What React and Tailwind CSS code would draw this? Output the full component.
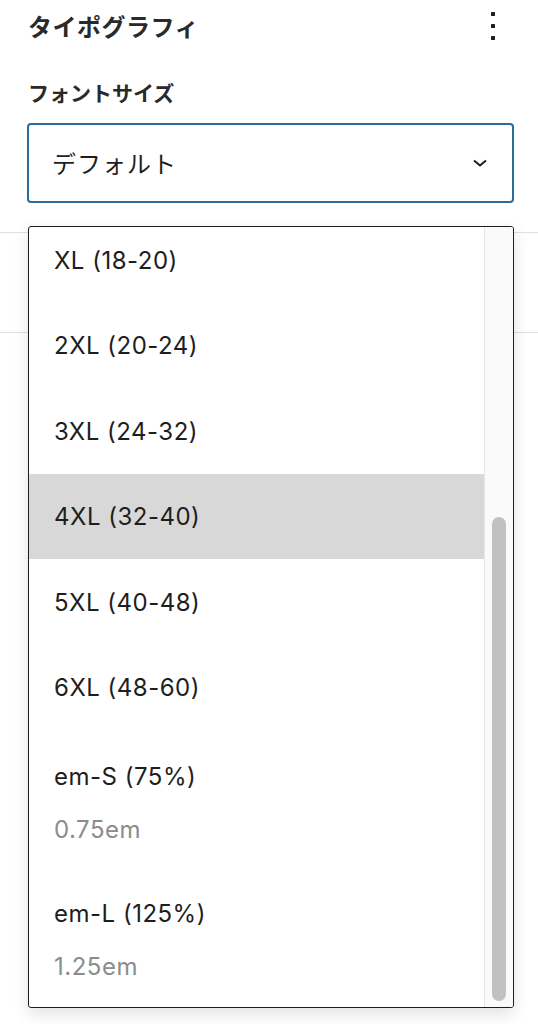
const sizes = ['XL (18-20)', '2XL (20-24)', '3XL (24-32)', '4XL (32-40)', '5XL (40-48)', '6XL (48-60)'];

const emSizes = [
  { label: 'em-S (75%)', hint: '0.75em' },
  { label: 'em-L (125%)', hint: '1.25em' },
];

const jp = { fontFamily: '"Noto Sans CJK JP", "Noto Sans", sans-serif' };
const latin = { fontFamily: 'Inter, "Noto Sans", sans-serif' };

export default function App() {
  const active = '4XL (32-40)';

  return (
    <div className="relative h-[1024px] w-full overflow-hidden bg-white text-[#1e1e1e]" style={jp}>
      {/* Panel */}
      <div className="flex h-[52px] items-center justify-between pl-[28px] pr-[40px]">
        <h2 className="text-[24px] font-semibold leading-[32px] tracking-[0.5px] text-[#2a2a2a]">タイポグラフィ</h2>
        <svg width="10" height="32" viewBox="0 0 10 32" fill="#1e1e1e">
          <rect x="3" y="2" width="4" height="4" rx="0.5" />
          <rect x="3" y="14" width="4" height="4" rx="0.5" />
          <rect x="3" y="26" width="4" height="4" rx="0.5" />
        </svg>
      </div>

      <div className="mt-[26px] pl-[28px] text-[21px] font-semibold leading-[28px] text-[#2a2a2a]">フォントサイズ</div>

      <div className="ml-[27px] mt-[17px] flex h-[80px] w-[487px] items-center justify-between rounded-[4px] border-2 border-[#2a6b99] pl-[23px] pr-[24px]">
        <span className="text-[24px] leading-[32px] tracking-[1px]">デフォルト</span>
        <svg width="16" height="10" viewBox="0 0 16 10" fill="none" stroke="#1e1e1e" strokeWidth="2">
          <path d="M2 2.5l6 5 6-5" />
        </svg>
      </div>

      <div className="mt-[29px] h-px w-full bg-[#e0e0e0]" />
      <div className="h-[99px]" />
      <div className="h-px w-full bg-[#e0e0e0]" />

      {/* Dropdown list */}
      <div className="absolute left-[28px] top-[226px] flex h-[782px] w-[486px] overflow-hidden rounded-[3px] border-[1.5px] border-[#1e1e1e] bg-white shadow-[0_6px_16px_rgba(0,0,0,0.12)]">
        <div className="flex-1 overflow-hidden" style={latin}>
          <div className="-mt-[10px]">
            {sizes.map((s) => (
              <div
                key={s}
                className={`flex h-[85.5px] items-center pl-[25px] pt-[2px] text-[24px] tracking-[0.5px] ${s === active ? 'bg-[#d8d8d8]' : ''}`}
              >
                {s}
              </div>
            ))}
            {emSizes.map((e) => (
              <div key={e.label} className="flex h-[137px] flex-col pl-[25px] pt-[33px] tracking-[0.5px]">
                <span className="text-[24px] leading-[28px]">{e.label}</span>
                <span className="mt-[25px] text-[24px] leading-[27px] text-[#8c8c8c]">{e.hint}</span>
              </div>
            ))}
          </div>
        </div>
        <div className="flex w-[29px] flex-col border-l border-[#e6e6e6] bg-[#fafafa] pb-[6px] pt-[290px]">
          <div className="mx-auto w-[14px] flex-1 rounded-full bg-[#c1c1c1]" />
        </div>
      </div>
    </div>
  );
}
